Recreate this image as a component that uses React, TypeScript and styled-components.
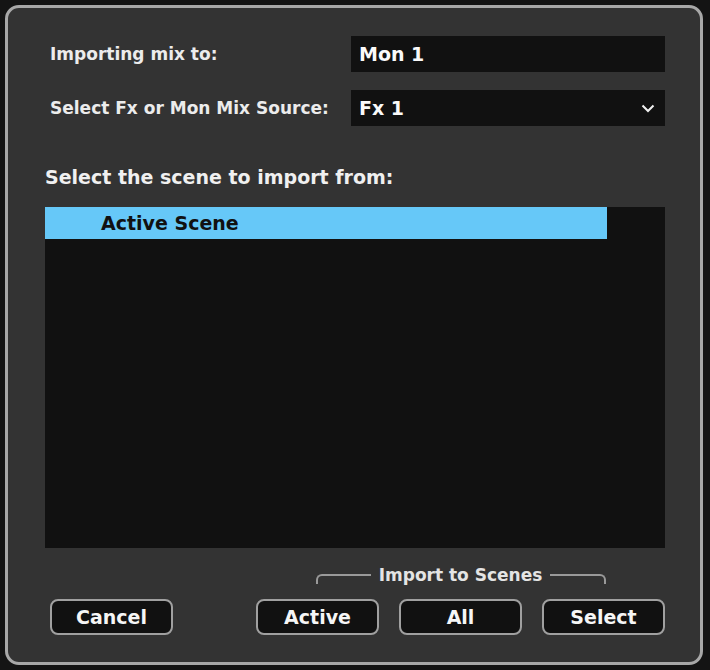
import styled, {createGlobalStyle} from "styled-components";

const GlobalStyle = createGlobalStyle`
  html, body {
    margin: 0;
    padding: 0;
    background: #141414;
  }
  body {
    font-family: "DejaVu Sans", "Noto Sans", sans-serif;
    font-weight: 700;
    color: #f2f2f2;
  }
`;

const Backdrop = styled.div`
  width: 710px;
  height: 670px;
  padding: 5px 7px 5px 5px;
  box-sizing: border-box;
`;

const Dialog = styled.div`
  box-sizing: border-box;
  height: 660px;
  border: 3px solid #a8a8a8;
  border-radius: 14px;
  background: #333333;
  padding: 28px 35px 27px 37px;
  display: flex;
  flex-direction: column;
`;

const Form = styled.div`
  display: grid;
  grid-template-columns: 301px 314px;
  row-gap: 18px;
  padding-left: 5px;
  align-items: center;
`;

const Label = styled.div`
  font-size: 17px;
  color: #ececec;
`;

const Field = styled.div`
  height: 36px;
  background: #111111;
  display: flex;
  align-items: center;
  justify-content: space-between;
  padding: 0 10px 0 8px;
  font-size: 19px;
  color: #fafafa;
`;

const Heading = styled.div`
  margin-top: 39px;
  font-size: 19px;
  line-height: 24px;
  color: #f0f0f0;
`;

const List = styled.div`
  margin-top: 18px;
  height: 341px;
  background: #111111;
`;

const Row = styled.div<{ $selected?: boolean }>`
  width: 562px;
  height: 32px;
  display: flex;
  align-items: center;
  padding-left: 56px;
  box-sizing: border-box;
  font-size: 19px;
  background: ${p => (p.$selected ? "#66c8f8" : "transparent")};
  color: ${p => (p.$selected ? "#111" : "#eee")};
`;

const Footer = styled.div`
  margin-top: 18px;
  display: flex;
  align-items: flex-end;
  justify-content: space-between;
  padding-left: 5px;
`;

const Group = styled.div`
  display: flex;
  flex-direction: column;
  align-items: center;
`;

const Bracket = styled.div`
  width: 290px;
  height: 18px;
  display: flex;
  align-items: flex-start;
  margin-bottom: 15px;
`;

const BracketLine = styled.div<{ $side: "left" | "right" }>`
  flex: 1;
  height: 8px;
  margin-top: 8px;
  border-top: 2px solid #9a9a9a;
  ${p => (p.$side === "left" ? "border-left" : "border-right")}: 2px solid #9a9a9a;
  ${p => (p.$side === "left" ? "border-top-left-radius" : "border-top-right-radius")}: 6px;
`;

const BracketLabel = styled.span`
  margin: 0 8px;
  font-size: 17px;
  line-height: 18px;
  color: #e4e4e4;
  white-space: nowrap;
`;

const Buttons = styled.div`
  display: flex;
  gap: 20px;
`;

const Button = styled.button`
  width: 123px;
  height: 36px;
  box-sizing: border-box;
  border: 2px solid #a0a0a0;
  border-radius: 8px;
  background: #111111;
  color: #f6f6f6;
  font-family: inherit;
  font-weight: 700;
  font-size: 19px;
  padding: 0;
`;

function Chevron() {
    return (
        <svg width="14" height="9" viewBox="0 0 14 9">
            <polyline points="1.5,1.5 7,7 12.5,1.5" fill="none" stroke="#f0f0f0" strokeWidth="2"/>
        </svg>
    );
}

function App() {
    return (
        <>
            <GlobalStyle/>
            <Backdrop>
                <Dialog>
                    <Form>
                        <Label>Importing mix to:</Label>
                        <Field>Mon 1</Field>
                        <Label>Select Fx or Mon Mix Source:</Label>
                        <Field>Fx 1<Chevron/></Field>
                    </Form>

                    <Heading>Select the scene to import from:</Heading>
                    <List>
                        <Row $selected>Active Scene</Row>
                    </List>

                    <Footer>
                        <Button>Cancel</Button>
                        <Group>
                            <Bracket>
                                <BracketLine $side="left"/>
                                <BracketLabel>Import to Scenes</BracketLabel>
                                <BracketLine $side="right"/>
                            </Bracket>
                            <Buttons>
                                <Button>Active</Button>
                                <Button>All</Button>
                                <Button>Select</Button>
                            </Buttons>
                        </Group>
                    </Footer>
                </Dialog>
            </Backdrop>
        </>
    );
}

export default App;
